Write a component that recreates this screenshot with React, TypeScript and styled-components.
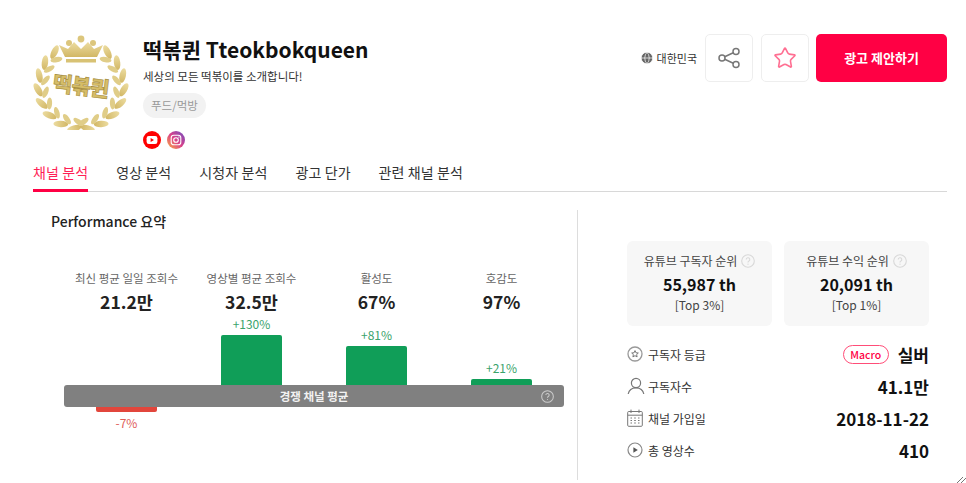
import React from 'react'
import styled, { createGlobalStyle } from 'styled-components'
import { Globe, Star } from 'lucide-react'

const GlobalStyle = createGlobalStyle`
  html, body {
    margin: 0;
    padding: 0;
    background: #fff;
  }
  * {
    box-sizing: border-box;
  }
  body {
    font-family: "Noto Sans CJK KR", "Noto Sans", sans-serif;
    color: #222;
  }
`

const metrics = [
  { label: '최신 평균 일일 조회수', value: '21.2만', delta: '-7%', bar: -5 },
  { label: '영상별 평균 조회수', value: '32.5만', delta: '+130%', bar: 50 },
  { label: '활성도', value: '67%', delta: '+81%', bar: 39 },
  { label: '호감도', value: '97%', delta: '+21%', bar: 6 },
]

const tabs = ['채널 분석', '영상 분석', '시청자 분석', '광고 단가', '관련 채널 분석']

const leaves = Array.from({ length: 8 }, (_, i) => 128 + i * 19)

const polar = (deg: number, r: number) => {
  const a = (deg * Math.PI) / 180
  return { x: 48 + r * Math.cos(a), y: 52 - r * Math.sin(a) }
}

const Leaf = ({ deg, r, lean, w, h, color }: { deg: number; r: number; lean: number; w: number; h: number; color: string }) => {
  const { x, y } = polar(deg, r)
  const rot = 180 - deg + lean
  return (
    <>
      <ellipse cx={x} cy={y} rx={w} ry={h} fill={color} transform={`rotate(${rot} ${x} ${y})`} />
      <ellipse cx={96 - x} cy={y} rx={w} ry={h} fill={color} transform={`rotate(${-rot} ${96 - x} ${y})`} />
    </>
  )
}

const Logo = () => (
  <svg width="96" height="96" viewBox="0 0 96 96">
    <defs>
      <linearGradient id="gold" x1="0" y1="0" x2="0" y2="1">
        <stop offset="0" stopColor="#ecdca0" />
        <stop offset="1" stopColor="#d2b765" />
      </linearGradient>
    </defs>
    <path d="M26 11 L35 15 L41 8 L48 15 L55 8 L61 15 L70 11 L64 23 H32 Z" fill="url(#gold)" />
    <rect x="33" y="25" width="30" height="3.5" fill="#d8c274" />
    <circle cx="48" cy="5" r="3.4" fill="#dcc67c" />
    <circle cx="36" cy="9" r="3" fill="#dcc67c" />
    <circle cx="60" cy="9" r="3" fill="#dcc67c" />
    {leaves.map((deg) => (
      <g key={deg}>
        <Leaf deg={deg} r={43} lean={-26} w={3.2} h={7.4} color="url(#gold)" />
        <Leaf deg={deg + 5} r={36} lean={32} w={2.6} h={6} color="#e0cd88" />
      </g>
    ))}
    <text
      x="48"
      y="60"
      textAnchor="middle"
      fontSize="21"
      fontWeight="900"
      fill="#d6bd68"
      stroke="#a68c3a"
      strokeWidth="0.6"
      letterSpacing="-0.6"
      fontFamily='"Noto Sans CJK KR", sans-serif'
      transform="rotate(7 48 52)"
    >
      떡볶퀸
    </text>
  </svg>
)

const YoutubeIcon = () => (
  <svg width="18" height="18" viewBox="0 0 18 18">
    <circle cx="9" cy="9" r="9" fill="#f00" />
    <rect x="3.6" y="5" width="10.8" height="8" rx="2.2" fill="#fff" />
    <path d="M7.6 7.1 L11 9 L7.6 10.9 Z" fill="#f00" />
  </svg>
)

const InstagramIcon = () => (
  <svg width="18" height="18" viewBox="0 0 18 18">
    <defs>
      <linearGradient id="insta" x1="0" y1="1" x2="1" y2="0">
        <stop offset="0" stopColor="#fdb140" />
        <stop offset="0.5" stopColor="#d9408a" />
        <stop offset="1" stopColor="#6a4fc4" />
      </linearGradient>
    </defs>
    <circle cx="9" cy="9" r="9" fill="url(#insta)" />
    <rect x="4.2" y="4.2" width="9.6" height="9.6" rx="2.6" fill="none" stroke="#fff" strokeWidth="1.1" />
    <circle cx="9" cy="9" r="2.3" fill="none" stroke="#fff" strokeWidth="1.1" />
    <circle cx="11.9" cy="6.1" r="0.7" fill="#fff" />
  </svg>
)

const ShareIcon = () => (
  <svg width="24" height="24" viewBox="0 0 24 24" fill="none" stroke="#777" strokeWidth="1.5">
    <circle cx="19" cy="5.5" r="3" />
    <circle cx="5" cy="12" r="3" />
    <circle cx="19" cy="18.5" r="3" />
    <path d="M7.7 10.7 L16.3 6.8 M7.7 13.3 L16.3 17.2" />
  </svg>
)

const HelpIcon = ({ color, size }: { color: string; size: number }) => (
  <svg width={size} height={size} viewBox="0 0 14 14" fill="none" stroke={color} strokeWidth="1.1">
    <circle cx="7" cy="7" r="6.3" />
    <path d="M5.2 5.5 A1.8 1.8 0 1 1 7.6 7.2 Q7 7.5 7 8.4" />
    <circle cx="7" cy="10.2" r="0.6" fill={color} stroke="none" />
  </svg>
)

const GradeIcon = () => (
  <svg width="16" height="16" viewBox="0 0 16 16" fill="none" stroke="#777" strokeWidth="1">
    <circle cx="8" cy="8" r="7" strokeWidth="1.3" stroke="#999" />
    <path d="M8 4.6 L9 6.8 L11.3 7 L9.6 8.6 L10.1 10.9 L8 9.7 L5.9 10.9 L6.4 8.6 L4.7 7 L7 6.8 Z" />
  </svg>
)

const UserIcon = () => (
  <svg width="18" height="18" viewBox="0 0 18 18" fill="none" stroke="#777" strokeWidth="1.2">
    <circle cx="9" cy="6" r="4.6" />
    <path d="M1.2 17 C2 12.8 5 10.8 9 10.8 C13 10.8 16 12.8 16.8 17" />
  </svg>
)

const CalendarIcon = () => (
  <svg width="16" height="18" viewBox="0 0 16 18" fill="none" stroke="#777" strokeWidth="1">
    <rect x="0.7" y="2.5" width="14.6" height="14.8" rx="1" />
    <path d="M0.7 6.2 H15.3 M4 0.6 V4 M12 0.6 V4" />
    <path d="M3.5 9 H5 M7.2 9 H8.8 M11 9 H12.5 M3.5 11.5 H5 M7.2 11.5 H8.8 M11 11.5 H12.5 M3.5 14 H5 M7.2 14 H8.8 M11 14 H12.5" />
  </svg>
)

const PlayIcon = () => (
  <svg width="16" height="16" viewBox="0 0 16 16" fill="none">
    <circle cx="8" cy="8" r="7" stroke="#888" strokeWidth="1.2" />
    <path d="M6.4 5.2 L10.8 8 L6.4 10.8 Z" fill="#555" />
  </svg>
)

const App: React.FC = () => {
  return (
    <Page>
      <GlobalStyle />
      <Header>
        <LogoBox>
          <Logo />
        </LogoBox>
        <Profile>
          <Title>떡볶퀸 Tteokbokqueen</Title>
          <Description>세상의 모든 떡볶이를 소개합니다!</Description>
          <Chip>푸드/먹방</Chip>
          <Socials>
            <YoutubeIcon />
            <InstagramIcon />
          </Socials>
        </Profile>
        <Actions>
          <Country>
            <Globe size={14} color="#fff" fill="#666" strokeWidth={1.2} />
            대한민국
          </Country>
          <IconButton>
            <ShareIcon />
          </IconButton>
          <IconButton>
            <Star size={24} color="#ff6f92" strokeWidth={1.6} />
          </IconButton>
          <PrimaryButton>광고 제안하기</PrimaryButton>
        </Actions>
      </Header>

      <TabBar>
        {tabs.map((tab, i) => (
          <Tab key={tab} $active={i === 0}>
            {tab}
          </Tab>
        ))}
      </TabBar>

      <Content>
        <LeftPanel>
          <SectionTitle>Performance 요약</SectionTitle>
          <Chart>
            <ChartTop>
              {metrics.map((m) => (
                <Metric key={m.label}>
                  <MetricLabel>{m.label}</MetricLabel>
                  <MetricValue>{m.value}</MetricValue>
                  {m.bar > 0 && (
                    <BarGroup>
                      <Delta $up>{m.delta}</Delta>
                      <Bar $up style={{ height: m.bar }} />
                    </BarGroup>
                  )}
                </Metric>
              ))}
            </ChartTop>
            <Band>
              경쟁 채널 평균
              <BandHelp>
                <HelpIcon color="#ccc" size={13} />
              </BandHelp>
            </Band>
            <ChartBottom>
              {metrics.map((m) => (
                <NegativeCell key={m.label}>
                  {m.bar < 0 && (
                    <>
                      <Bar style={{ height: -m.bar }} />
                      <Delta>{m.delta}</Delta>
                    </>
                  )}
                </NegativeCell>
              ))}
            </ChartBottom>
          </Chart>
        </LeftPanel>

        <RightPanel>
          <Cards>
            <RankCard>
              <RankLabel>
                유튜브 구독자 순위 <HelpIcon color="#d8d8d8" size={14} />
              </RankLabel>
              <RankValue>55,987 th</RankValue>
              <RankTop>[Top 3%]</RankTop>
            </RankCard>
            <RankCard>
              <RankLabel>
                유튜브 수익 순위 <HelpIcon color="#d8d8d8" size={14} />
              </RankLabel>
              <RankValue>20,091 th</RankValue>
              <RankTop>[Top 1%]</RankTop>
            </RankCard>
          </Cards>
          <InfoList>
            <InfoRow>
              <InfoName>
                <IconSlot><GradeIcon /></IconSlot>
                구독자 등급
              </InfoName>
              <InfoValue>
                <Badge>Macro</Badge>
                실버
              </InfoValue>
            </InfoRow>
            <InfoRow>
              <InfoName>
                <IconSlot><UserIcon /></IconSlot>
                구독자수
              </InfoName>
              <InfoValue>41.1만</InfoValue>
            </InfoRow>
            <InfoRow>
              <InfoName>
                <IconSlot><CalendarIcon /></IconSlot>
                채널 가입일
              </InfoName>
              <InfoValue>2018-11-22</InfoValue>
            </InfoRow>
            <InfoRow>
              <InfoName>
                <IconSlot><PlayIcon /></IconSlot>
                총 영상수
              </InfoName>
              <InfoValue>410</InfoValue>
            </InfoRow>
          </InfoList>
        </RightPanel>
      </Content>
      <ResizeMark width="9" height="6" viewBox="0 0 9 6" fill="none" stroke="#777" strokeWidth="1">
        <path d="M0 6 L6 0 M4 6 L9 1" />
      </ResizeMark>
    </Page>
  )
}

const Page = styled.div`
  position: relative;
  width: 966px;
  height: 483px;
  overflow: hidden;
  padding: 34px 19px 0 33px;
`

const Header = styled.div`
  display: flex;
  align-items: flex-start;
  height: 118px;
`

const LogoBox = styled.div`
  width: 110px;
  flex-shrink: 0;
  display: flex;
`

const Profile = styled.div`
  display: flex;
  flex-direction: column;
  align-items: flex-start;
  flex: 1;
`

const Title = styled.div`
  font-size: 21px;
  font-weight: 700;
  line-height: 30px;
  color: #111;
`

const Description = styled.div`
  font-size: 11.5px;
  line-height: 18px;
  margin-top: 3px;
  color: #333;
`

const Chip = styled.div`
  margin-top: 8px;
  height: 25px;
  padding: 0 8px;
  border-radius: 13px;
  background: #f2f2f2;
  color: #999;
  font-size: 11.5px;
  line-height: 25px;
`

const Socials = styled.div`
  display: flex;
  gap: 6px;
  margin-top: 13px;
`

const Actions = styled.div`
  display: flex;
  align-items: center;
  height: 48px;
`

const Country = styled.div`
  display: flex;
  align-items: center;
  gap: 3px;
  font-size: 11px;
  color: #333;
  margin-right: 8px;
`

const IconButton = styled.div`
  width: 48px;
  height: 48px;
  border: 1px solid #eee;
  border-radius: 5px;
  display: flex;
  align-items: center;
  justify-content: center;

  & + & {
    margin-left: 8px;
  }
`

const PrimaryButton = styled.div`
  width: 131px;
  height: 48px;
  margin-left: 7px;
  border-radius: 5px;
  background: #ff0044;
  color: #fff;
  font-size: 13px;
  font-weight: 700;
  line-height: 48px;
  text-align: center;
`

const TabBar = styled.div`
  display: flex;
  gap: 28px;
  height: 40px;
  border-bottom: 1px solid #d8d8d8;
`

const Tab = styled.div<{ $active?: boolean }>`
  font-size: 14px;
  letter-spacing: 0.1px;
  line-height: 40px;
  height: 40px;
  color: ${(p) => (p.$active ? '#ff1f55' : '#333')};
  border-bottom: ${(p) => (p.$active ? '3px solid #ff0044' : 'none')};
`

const Content = styled.div`
  display: flex;
  margin-top: 18px;
`

const LeftPanel = styled.div`
  width: 545px;
  height: 270px;
  border-right: 1px solid #ddd;
  flex-shrink: 0;
`

const SectionTitle = styled.div`
  margin-left: 18px;
  font-size: 14px;
  font-weight: 500;
  line-height: 22px;
  color: #222;
`

const Chart = styled.div`
  margin: 37px 0 0 31px;
  width: 500px;
`

const ChartTop = styled.div`
  display: grid;
  grid-template-columns: repeat(4, 1fr);
  height: 116px;
`

const Metric = styled.div`
  display: flex;
  flex-direction: column;
  align-items: center;
`

const MetricLabel = styled.div`
  font-size: 11.5px;
  line-height: 18px;
  color: #666;
`

const MetricValue = styled.div`
  font-size: 17.5px;
  font-weight: 700;
  line-height: 29px;
  color: #222;
`

const BarGroup = styled.div`
  margin-top: auto;
  display: flex;
  flex-direction: column;
  align-items: center;
`

const Delta = styled.div<{ $up?: boolean }>`
  font-size: 12px;
  line-height: 16px;
  margin: ${(p) => (p.$up ? '0 0 3px' : '3px 0 0')};
  color: ${(p) => (p.$up ? '#3aa36b' : '#e0605a')};
`

const Bar = styled.div<{ $up?: boolean }>`
  width: 61px;
  flex-shrink: 0;
  background: ${(p) => (p.$up ? '#109e58' : '#e2463c')};
  border-radius: ${(p) => (p.$up ? '2px 2px 0 0' : '0 0 2px 2px')};
`

const Band = styled.div`
  position: relative;
  height: 22px;
  border-radius: 3px;
  background: #808080;
  color: #f2f2f2;
  font-size: 11.5px;
  font-weight: 700;
  line-height: 23px;
  text-align: center;
`

const BandHelp = styled.span`
  position: absolute;
  right: 10px;
  top: 5px;
  display: flex;
`

const ChartBottom = styled.div`
  display: grid;
  grid-template-columns: repeat(4, 1fr);
`

const NegativeCell = styled.div`
  display: flex;
  flex-direction: column;
  align-items: center;
`

const RightPanel = styled.div`
  width: 302px;
  margin-left: 49px;
  padding-top: 31px;
`

const Cards = styled.div`
  display: grid;
  grid-template-columns: 145px 145px;
  gap: 12px;
`

const RankCard = styled.div`
  height: 85px;
  padding-top: 11px;
  border-radius: 6px;
  background: #f7f7f7;
  text-align: center;
`

const RankLabel = styled.div`
  display: flex;
  align-items: center;
  justify-content: center;
  gap: 4px;
  font-size: 12px;
  line-height: 18px;
  color: #444;
`

const RankValue = styled.div`
  font-size: 16px;
  font-weight: 700;
  line-height: 24px;
  margin-top: 2px;
  color: #111;
`

const RankTop = styled.div`
  font-size: 12px;
  line-height: 18px;
  color: #444;
`

const InfoList = styled.div`
  display: flex;
  flex-direction: column;
  gap: 4px;
  margin-top: 14px;
`

const InfoRow = styled.div`
  display: flex;
  align-items: center;
  justify-content: space-between;
  height: 28px;
`

const InfoName = styled.div`
  display: flex;
  align-items: center;
  font-size: 12px;
  color: #333;
`

const IconSlot = styled.span`
  width: 21px;
  display: flex;
  justify-content: flex-start;
`

const InfoValue = styled.div`
  display: flex;
  align-items: center;
  gap: 9px;
  font-size: 17px;
  font-weight: 700;
  color: #111;
`

const Badge = styled.span`
  width: 46px;
  height: 19px;
  border: 1px solid #ff4d78;
  border-radius: 10px;
  color: #ff0044;
  font-size: 10.5px;
  font-weight: 500;
  line-height: 17px;
  text-align: center;
`

const ResizeMark = styled.svg`
  position: absolute;
  right: 0;
  bottom: 0;
`

export default App
